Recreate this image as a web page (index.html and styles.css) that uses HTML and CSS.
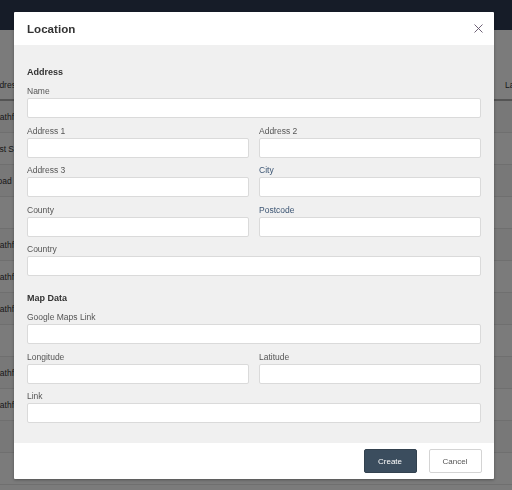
FILE: index.html
```html
<!DOCTYPE html>
<html>
<head>
<meta charset="utf-8">
<link rel="stylesheet" href="styles.css">
</head>
<body>
<div class="navbar"></div>
<div class="content">
  <div class="list">
    <div class="list-head"><span>Address</span><span>Latitude</span></div>
    <div class="list-row"><span>Heathfield Road</span><span></span></div>
    <div class="list-row"><span>East Sussex</span><span></span></div>
    <div class="list-row"><span>Broad Close</span><span></span></div>
    <div class="list-row"><span></span><span></span></div>
    <div class="list-row"><span>Heathfield</span><span></span></div>
    <div class="list-row"><span>Heathfield</span><span></span></div>
    <div class="list-row"><span>Heathfield</span><span></span></div>
    <div class="list-row"><span></span><span></span></div>
    <div class="list-row"><span>Heathfield</span><span></span></div>
    <div class="list-row"><span>Heathfield</span><span></span></div>
    <div class="list-row"><span></span><span></span></div>
    <div class="list-row"><span></span><span></span></div>
  </div>
</div>
<div class="backdrop"></div>
<div class="modal">
  <div class="modal-header">
    <span class="modal-title">Location</span>
    <svg class="close" width="9" height="9" viewBox="0 0 9 9"><path d="M0.5 0.5L8.5 8.5M8.5 0.5L0.5 8.5" stroke="#5e5066" stroke-width="0.9" fill="none"/></svg>
  </div>
  <div class="modal-body">
    <div class="section-title">Address</div>
    <div class="group"><label>Name</label><input type="text"></div>
    <div class="row">
      <div class="group"><label>Address 1</label><input type="text"></div>
      <div class="group"><label>Address 2</label><input type="text"></div>
    </div>
    <div class="row">
      <div class="group"><label>Address 3</label><input type="text"></div>
      <div class="group"><label class="blue">City</label><input type="text"></div>
    </div>
    <div class="row">
      <div class="group"><label>County</label><input type="text"></div>
      <div class="group"><label class="blue">Postcode</label><input type="text"></div>
    </div>
    <div class="group"><label>Country</label><input type="text"></div>
    <div class="section-title">Map Data</div>
    <div class="group"><label>Google Maps Link</label><input type="text"></div>
    <div class="row">
      <div class="group"><label>Longitude</label><input type="text"></div>
      <div class="group"><label>Latitude</label><input type="text"></div>
    </div>
    <div class="group"><label>Link</label><input type="text"></div>
  </div>
  <div class="modal-footer">
    <button class="btn btn-primary">Create</button>
    <button class="btn btn-default">Cancel</button>
  </div>
</div>
</body>
</html>
```
FILE: styles.css
```css
html, body {
  margin: 0;
  padding: 0;
}
body {
  background: #f6f6f6;
  font-family: "Liberation Sans", Arial, sans-serif;
  color: #333;
  overflow: hidden;
  height: 490px;
}
.navbar {
  height: 30px;
  background: #2c3950;
}
.content {
  padding-top: 38px;
}
.list {
  margin-left: -11px;
  font-size: 8.5px;
  color: #333;
}
.list-head,
.list-row {
  display: grid;
  grid-template-columns: 516px auto;
  white-space: nowrap;
  overflow: hidden;
  line-height: 12px;
  box-sizing: border-box;
}
.list-head {
  height: 33px;
  padding: 11px 0 8px;
  border-bottom: 2px solid #a8a8a8;
}
.list-row {
  height: 32px;
  padding: 10px 0 9px;
  border-bottom: 1px solid #dedede;
}
.list-row:nth-child(even) {
  background: #f0f0f0;
}
.backdrop {
  position: fixed;
  inset: 0;
  background: rgba(0, 0, 0, 0.5);
}
.modal {
  position: absolute;
  left: 14px;
  top: 12px;
  width: 480px;
  background: #fff;
  border-radius: 1px;
  box-shadow: 0 1px 3px rgba(0, 0, 0, 0.35);
}
.modal-header {
  height: 33px;
  padding: 0 11.5px 0 13px;
  display: flex;
  align-items: center;
  justify-content: space-between;
}
.modal-title {
  font-size: 11.6px;
  font-weight: bold;
  color: #333;
}
.close {
  display: block;
}
.modal-body {
  background: #f0f0f0;
  padding: 2px 13px 13.5px;
}
.section-title {
  font-size: 9px;
  font-weight: bold;
  line-height: 12px;
  padding-top: 9.5px;
  margin: 0 0 7px;
  color: #333;
}
.modal-body > .section-title:first-child {
  padding-top: 19px;
}
.row {
  display: grid;
  grid-template-columns: 1fr 1fr;
  column-gap: 10px;
}
.group {
  margin-bottom: 6.5px;
}
.group label {
  display: block;
  font-size: 8.5px;
  line-height: 12px;
  margin-bottom: 1px;
  color: #555;
}
.group label.blue {
  color: #3c5573;
}
.group input {
  display: block;
  width: 100%;
  height: 20px;
  box-sizing: border-box;
  margin: 0;
  border: 1px solid #dadada;
  border-radius: 2px;
  background: #fff;
  outline: none;
}
.modal-footer {
  display: flex;
  justify-content: flex-end;
  gap: 12px;
  padding: 6px 12.5px 6px;
}
.btn {
  width: 53px;
  height: 24px;
  box-sizing: border-box;
  font-family: "Liberation Sans", Arial, sans-serif;
  font-size: 8px;
  border-radius: 2px;
  padding: 0;
  margin: 0;
}
.btn-primary {
  background: #3b4d5e;
  border: 1px solid #33424f;
  color: #fff;
}
.btn-default {
  background: #fff;
  border: 1px solid #d4d4d4;
  color: #555;
}
```
